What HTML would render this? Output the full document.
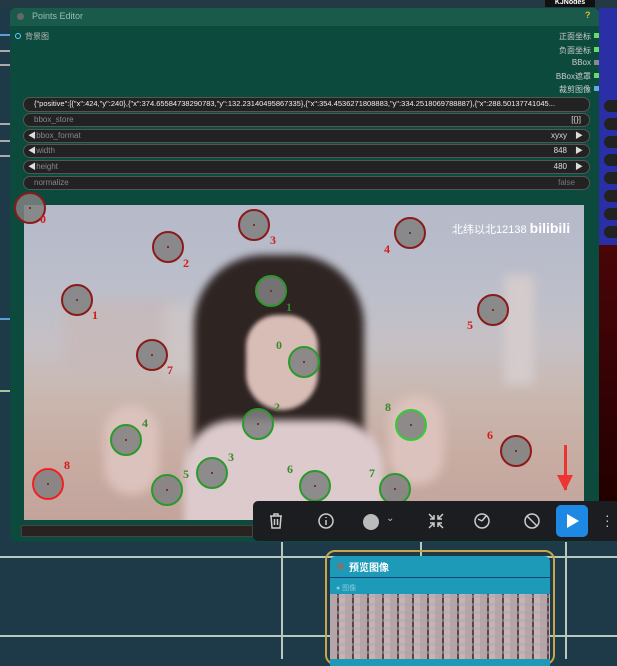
<!DOCTYPE html>
<html><head><meta charset="utf-8"><style>
*{margin:0;padding:0;box-sizing:border-box}
body{width:617px;height:659px;overflow:hidden;background:#1e3a48;font-family:"Liberation Sans","Noto Sans CJK SC",sans-serif;position:relative}
.abs{position:absolute}
.row{position:absolute;left:23px;width:567px;height:14px;border-radius:7px;background:#222;border:1px solid #555;font-size:8px;color:#888;line-height:12px;padding:0 10px}
.row .v{position:absolute;right:22px;color:#ddd}
.row .ar{position:absolute;right:6px;color:#ddd;font-size:8px}
.row .al{position:absolute;left:4px;color:#ddd;font-size:8px}
.out{position:absolute;right:26px;font-size:8px;color:#ccc;text-align:right}
.dot{position:absolute;width:5px;height:5px;right:19px}
.c{position:absolute;width:32px;height:32px;border-radius:50%;background:rgba(128,128,128,.85);border:2px solid #8b1a1a}
.c::after{content:"";position:absolute;left:13px;top:13px;width:2px;height:2px;background:#733}
.g{border-color:#2a9a2a}
.l{position:absolute;font:bold 12px "Liberation Serif",serif;color:#d21c1c}
.lg{color:#3a8a2a}
</style></head><body>
<div class="abs" style="left:0;top:556px;width:617px;height:2px;background:#b8c8bc"></div>
<div class="abs" style="left:0;top:635px;width:617px;height:2px;background:#b8c8bc"></div>
<div class="abs" style="left:281px;top:540px;width:2px;height:119px;background:#b8c8bc"></div>
<div class="abs" style="left:420px;top:540px;width:2px;height:119px;background:#b8c8bc"></div>
<div class="abs" style="left:565px;top:540px;width:2px;height:119px;background:#b8c8bc"></div>
<div class="abs" style="left:0;top:34px;width:14px;height:2px;background:#5aa0d8"></div>
<div class="abs" style="left:0;top:50px;width:10px;height:2px;background:#aaa"></div>
<div class="abs" style="left:0;top:64px;width:10px;height:2px;background:#aaa"></div>
<div class="abs" style="left:0;top:123px;width:10px;height:2px;background:#aaa"></div>
<div class="abs" style="left:0;top:140px;width:10px;height:2px;background:#aaa"></div>
<div class="abs" style="left:0;top:155px;width:10px;height:2px;background:#aaa"></div>
<div class="abs" style="left:0;top:318px;width:10px;height:2px;background:#5aa0d8"></div>
<div class="abs" style="left:0;top:390px;width:10px;height:2px;background:#9c9"></div>
<div class="abs" style="left:0;top:0;width:617px;height:7px;background:#233a44"></div>
<div class="abs" style="left:545px;top:0;width:50px;height:7px;background:#111;color:#fff;font-size:7px;font-weight:bold;text-align:center;line-height:5px">KJNodes</div>
<div class="abs" style="left:599px;top:8px;width:18px;height:237px;background:#2b2fa6"></div>
<div class="abs" style="left:599px;top:245px;width:18px;height:260px;background:linear-gradient(#4a0508,#200)"></div>
<div class="abs" style="left:604px;top:100px;width:13px;height:12px;border-radius:6px 0 0 6px;background:#222"></div>
<div class="abs" style="left:604px;top:118px;width:13px;height:12px;border-radius:6px 0 0 6px;background:#222"></div>
<div class="abs" style="left:604px;top:136px;width:13px;height:12px;border-radius:6px 0 0 6px;background:#222"></div>
<div class="abs" style="left:604px;top:154px;width:13px;height:12px;border-radius:6px 0 0 6px;background:#222"></div>
<div class="abs" style="left:604px;top:172px;width:13px;height:12px;border-radius:6px 0 0 6px;background:#222"></div>
<div class="abs" style="left:604px;top:190px;width:13px;height:12px;border-radius:6px 0 0 6px;background:#222"></div>
<div class="abs" style="left:604px;top:208px;width:13px;height:12px;border-radius:6px 0 0 6px;background:#222"></div>
<div class="abs" style="left:604px;top:226px;width:13px;height:12px;border-radius:6px 0 0 6px;background:#222"></div>
<div class="abs" style="left:10px;top:8px;width:589px;height:534px;background:#0d4a3e;border-radius:6px"></div>
<div class="abs" style="left:10px;top:8px;width:589px;height:18px;background:#1a5a4a;border-radius:6px 6px 0 0"></div>
<div class="abs" style="left:17px;top:13px;width:7px;height:7px;border-radius:50%;background:#666"></div>
<div class="abs" style="left:32px;top:11px;font-size:9px;color:#9bb">Points Editor</div>
<div class="abs" style="left:585px;top:10px;font-size:9px;color:#db3;font-weight:bold">?</div>
<div class="abs" style="left:15px;top:33px;width:6px;height:6px;border-radius:50%;border:1.5px solid #6cf"></div>
<div class="abs" style="left:25px;top:31px;font-size:8px;color:#bbb">背景图</div>
<div class="out" style="top:31px">正面坐标</div><div class="dot" style="top:33px;background:#6d6;right:18px"></div>
<div class="out" style="top:45px">负面坐标</div><div class="dot" style="top:47px;background:#6d6;right:18px"></div>
<div class="out" style="top:58px">BBox</div><div class="dot" style="top:60px;background:#889;right:18px"></div>
<div class="out" style="top:71px">BBox遮罩</div><div class="dot" style="top:73px;background:#6d6;right:18px"></div>
<div class="out" style="top:84px">裁剪图像</div><div class="dot" style="top:86px;background:#6ad;right:18px"></div>
<div class="row" style="top:97px;height:15px;color:#eee;white-space:nowrap;overflow:hidden;font-size:7.5px">{"positive":[{"x":424,"y":240},{"x":374.65584738290783,"y":132.23140495867335},{"x":354.4536271808883,"y":334.2518069788887},{"x":288.50137741045...</div>
<div class="row" style="top:113px">bbox_store<span class="v" style="right:8px">[{}]</span></div>
<div class="row" style="top:129px"><span class="al">◀</span>&nbsp;bbox_format<span class="v">xyxy</span><span class="ar">▶</span></div>
<div class="row" style="top:144px"><span class="al">◀</span>&nbsp;width<span class="v">848</span><span class="ar">▶</span></div>
<div class="row" style="top:160px"><span class="al">◀</span>&nbsp;height<span class="v">480</span><span class="ar">▶</span></div>
<div class="row" style="top:176px">normalize<span class="v" style="right:14px;color:#777">false</span></div>
<div class="abs" style="left:21px;top:525px;width:232px;height:12px;background:#2a2220;border:1px solid #444"></div>
<div class="abs" style="left:24px;top:205px;width:560px;height:315px;overflow:hidden;background:linear-gradient(#b5b9c9 0%,#bdbfca 30%,#c6c0c4 45%,#c9b8b0 60%,#c8aca2 80%,#c2a49c 100%)">
 <div class="abs" style="left:40px;top:95px;width:110px;height:70px;background:#c8b8b8;filter:blur(6px);opacity:.7"></div>
 <div class="abs" style="left:140px;top:100px;width:90px;height:70px;background:#d0c8c8;filter:blur(6px);opacity:.7"></div>
 <div class="abs" style="left:480px;top:70px;width:30px;height:110px;background:#d4cbcc;filter:blur(5px)"></div>
 <div class="abs" style="left:170px;top:50px;width:170px;height:230px;border-radius:70px 70px 30px 30px;background:#2e2422;filter:blur(4px)"></div>
 <div class="abs" style="left:222px;top:110px;width:72px;height:95px;border-radius:35px 35px 40px 40px;background:#d8bcb6;filter:blur(2px)"></div>
 <div class="abs" style="left:160px;top:215px;width:200px;height:120px;border-radius:50px 50px 0 0;background:#dccacd;filter:blur(4px)"></div>
 <div class="abs" style="left:80px;top:200px;width:55px;height:90px;border-radius:30px;background:#dcc2bc;filter:blur(5px)"></div>
 <div class="abs" style="left:365px;top:190px;width:55px;height:90px;border-radius:30px;background:#dcc2bc;filter:blur(5px)"></div>
 <div class="abs" style="left:428px;top:15px;font-size:11px;color:#fff">北纬以北12138 <b style="font-size:14px">bilibili</b></div>
 <div class="abs" style="left:540px;top:240px;width:3px;height:45px;background:#e33"></div>
 <div class="abs" style="left:533px;top:270px;width:0;height:0;border-left:8px solid transparent;border-right:8px solid transparent;border-top:16px solid #e33"></div>
</div>
<div class="c" style="left:14px;top:192px"></div><div class="l" style="left:40px;top:212px">0</div>
<div class="c" style="left:152px;top:231px"></div><div class="l" style="left:183px;top:256px">2</div>
<div class="c" style="left:238px;top:209px"></div><div class="l" style="left:270px;top:233px">3</div>
<div class="c" style="left:394px;top:217px"></div><div class="l" style="left:384px;top:242px">4</div>
<div class="c" style="left:61px;top:284px"></div><div class="l" style="left:92px;top:308px">1</div>
<div class="c" style="left:477px;top:294px"></div><div class="l" style="left:467px;top:318px">5</div>
<div class="c" style="left:136px;top:339px"></div><div class="l" style="left:167px;top:363px">7</div>
<div class="c" style="left:500px;top:435px"></div><div class="l" style="left:487px;top:428px">6</div>
<div class="c" style="left:32px;top:468px;border-color:#e22"></div><div class="l" style="left:64px;top:458px">8</div>
<div class="c g" style="left:255px;top:275px"></div><div class="l lg" style="left:286px;top:300px">1</div>
<div class="c g" style="left:288px;top:346px"></div><div class="l lg" style="left:276px;top:338px">0</div>
<div class="c g" style="left:242px;top:408px"></div><div class="l lg" style="left:274px;top:400px">2</div>
<div class="c g" style="left:110px;top:424px"></div><div class="l lg" style="left:142px;top:416px">4</div>
<div class="c g" style="left:395px;top:409px;border-color:#3c3"></div><div class="l lg" style="left:385px;top:400px">8</div>
<div class="c g" style="left:196px;top:457px"></div><div class="l lg" style="left:228px;top:450px">3</div>
<div class="c g" style="left:151px;top:474px"></div><div class="l lg" style="left:183px;top:467px">5</div>
<div class="c g" style="left:299px;top:470px"></div><div class="l lg" style="left:287px;top:462px">6</div>
<div class="c g" style="left:379px;top:473px"></div><div class="l lg" style="left:369px;top:466px">7</div>
<div class="abs" style="left:253px;top:501px;width:370px;height:40px;background:#1b1d20;border-radius:5px"></div>
<svg class="abs" style="left:267px;top:512px" width="18" height="18" viewBox="0 0 18 18" fill="none" stroke="#ccc" stroke-width="1.5"><path d="M3 4h12M7 4V2h4v2M4 4l1 12h8l1-12M7.5 7v6M10.5 7v6"/></svg>
<svg class="abs" style="left:317px;top:512px" width="18" height="18" viewBox="0 0 18 18" fill="none" stroke="#ccc" stroke-width="1.5"><circle cx="9" cy="9" r="7"/><path d="M9 8v5M9 5v1"/></svg>
<div class="abs" style="left:363px;top:514px;width:16px;height:16px;border-radius:50%;background:#bbb"></div>
<div class="abs" style="left:386px;top:513px;color:#bbb;font-size:10px">⌄</div>
<svg class="abs" style="left:427px;top:512px" width="18" height="18" viewBox="0 0 18 18" fill="none" stroke="#ccc" stroke-width="1.5"><path d="M2 2l5 5M7 3v4H3M16 2l-5 5M11 3v4h4M2 16l5-5M7 15v-4H3M16 16l-5-5M11 15v-4h4"/></svg>
<svg class="abs" style="left:473px;top:512px" width="18" height="18" viewBox="0 0 18 18" fill="none" stroke="#ccc" stroke-width="1.5"><circle cx="9" cy="9" r="7"/><path d="M9 9l4-5M9 9l-4-2"/></svg>
<svg class="abs" style="left:523px;top:512px" width="18" height="18" viewBox="0 0 18 18" fill="none" stroke="#ccc" stroke-width="1.5"><circle cx="9" cy="9" r="7"/><path d="M4 4l10 10"/></svg>
<div class="abs" style="left:556px;top:505px;width:32px;height:32px;background:#1e88e5;border-radius:5px"></div>
<div class="abs" style="left:567px;top:514px;width:0;height:0;border-top:7px solid transparent;border-bottom:7px solid transparent;border-left:12px solid #fff"></div>
<div class="abs" style="left:605px;top:513px;color:#ccc;font-size:14px;line-height:5px">·<br>·<br>·</div>
<div class="abs" style="left:325px;top:550px;width:230px;height:115px;border:2px solid #c9a548;border-radius:10px"></div>
<div class="abs" style="left:330px;top:556px;width:220px;height:110px;background:#1d9ab8;border-radius:6px 6px 0 0"></div>
<div class="abs" style="left:337px;top:563px;width:7px;height:7px;border-radius:50%;background:#777"></div>
<div class="abs" style="left:349px;top:559px;font-size:10px;color:#fff;font-weight:bold">预览图像</div>
<div class="abs" style="left:330px;top:577px;width:220px;height:1px;background:#147"></div>
<div class="abs" style="left:336px;top:583px;font-size:7px;color:#8cd">● 图像</div>
<div class="abs" style="left:330px;top:594px;width:220px;height:65px;background:repeating-linear-gradient(90deg,#b9a3a3 0 7px,#5a4444 7px 9px,#c9b3b2 9px 15px),#aaa"></div>
<div class="abs" style="left:330px;top:594px;width:220px;height:65px;background:repeating-linear-gradient(0deg,transparent 0 5px,rgba(160,170,190,.45) 5px 8px)"></div>
</body></html>
